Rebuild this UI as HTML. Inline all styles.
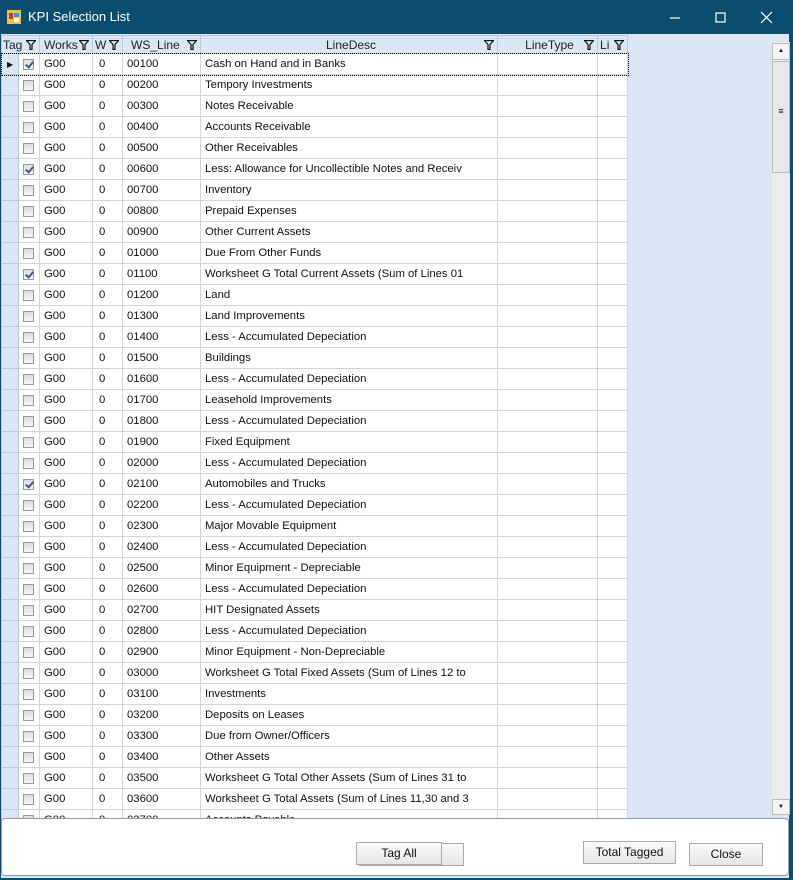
<!DOCTYPE html>
<html><head><style>
*{margin:0;padding:0;box-sizing:border-box}
body{width:793px;height:880px;overflow:hidden;background:#0b4f70;font-family:"Liberation Sans",sans-serif;font-size:11.3px;color:#111;position:relative}
.title{position:absolute;left:0;top:0;width:793px;height:34px;background:#0a4d6e;color:#fff}
.title .t{position:absolute;left:28px;top:9px;font-size:13px}
.client{position:absolute;left:1px;top:34px;width:788px;height:844px;background:#dbe6f4}
table{position:absolute;left:0;top:1px;border-collapse:collapse;table-layout:fixed;width:627px}
td,th{height:21px;border:1px solid #d5d5d5;white-space:nowrap;overflow:hidden;padding-left:4px;font-weight:normal;text-align:left}
th{height:18px;background:#dbe6f4;border-color:#b9c8dc;position:relative;color:#222;font-size:12px}
td{background:#fff}
td.rh{background:#dbe6f4;border-color:#b9c8dc;padding:0}
.cb{display:inline-block;width:11px;height:11px;border:1px solid #999;background:linear-gradient(#ddd,#f6f6f6);vertical-align:middle;position:relative}
.cb.c::after{content:"";position:absolute;left:3px;top:0px;width:3px;height:6px;border:solid #3b5998;border-width:0 2px 2px 0;transform:rotate(40deg)}
.f{position:absolute;right:3px;top:4px;width:10px;height:10px}
.sb{position:absolute;left:771px;top:8px;width:18px;height:773px;background:#ececec}
.bot{position:absolute;left:0;top:784px;width:788px;height:58px;background:#fff;border:1px solid #999;border-radius:4px}
.btn{position:absolute;height:23px;border:1px solid #aaa;background:linear-gradient(#fafafa,#e6e6e6);text-align:center;line-height:21px;font-size:12px}
</style></head><body>
<div class="title">
<svg style="position:absolute;left:7px;top:10px" width="14" height="14"><rect x="0" y="0" width="14" height="14" fill="#f0c040"/><rect x="2" y="3" width="4" height="6" fill="#c33"/><rect x="7" y="3" width="5" height="4" fill="#39c"/><rect x="7" y="8" width="5" height="4" fill="#fff"/></svg>
<span class="t">KPI Selection List</span>
<svg style="position:absolute;left:668px;top:11px" width="110" height="14" stroke="#fff" fill="none" stroke-width="1.2"><line x1="2" y1="7" x2="12" y2="7"/><rect x="48" y="2" width="9" height="9"/><line x1="93" y1="1" x2="104" y2="12"/><line x1="104" y1="1" x2="93" y2="12"/></svg>
</div>
<div class="client">
<table>
<colgroup><col style="width:17px"><col style="width:21px"><col style="width:53px"><col style="width:30px"><col style="width:78px"><col style="width:297px"><col style="width:100px"><col style="width:30px"></colgroup>
<tr><th style="padding-left:1px" colspan="2">Tag<svg class="f"></svg></th><th>Works<svg class="f"></svg></th><th style="padding-left:2px">W<svg class="f"></svg></th><th style="padding-left:8px">WS_Line<svg class="f"></svg></th><th style="text-align:center">LineDesc<svg class="f"></svg></th><th style="text-align:center">LineType<svg class="f"></svg></th><th style="padding-left:2px">Li<svg class="f"></svg></th></tr>
<tbody id="b"></tbody>
</table>
<div class="sb"><div style="position:absolute;left:0;top:1px;width:18px;height:17px;border:1px solid #bbb;background:#f4f4f4;font-size:6px;text-align:center;line-height:15px">▲</div><div style="position:absolute;left:0;top:19px;width:18px;height:112px;border:1px solid #bbb;background:#e8e8e8;text-align:center;padding-top:44px;font-size:9px">≡</div><div style="position:absolute;left:0;bottom:0;width:18px;height:16px;border:1px solid #bbb;background:#f4f4f4;font-size:6px;text-align:center;line-height:14px">▼</div></div>
<div class="bot">
<div class="btn" style="left:357px;top:24px;width:105px"></div>
<div class="btn" style="left:354px;top:23px;width:86px">Tag All</div>
<div class="btn" style="left:581px;top:22px;width:93px">Total Tagged</div>
<div class="btn" style="left:687px;top:24px;width:74px">Close</div>
</div>
</div>
<script>
document.querySelectorAll("svg.f").forEach(function(s){s.setAttribute("viewBox","0 0 10 10");s.innerHTML='<path d="M0.5 0.5H9.5L6 4.5V9.5H4V4.5Z" fill="none" stroke="#111" stroke-width="1.2"/>';});
var d=[["00100","Cash on Hand and in Banks",1],["00200","Tempory Investments"],["00300","Notes Receivable"],["00400","Accounts Receivable"],["00500","Other Receivables"],["00600","Less: Allowance for Uncollectible Notes and Receiv",1],["00700","Inventory"],["00800","Prepaid Expenses"],["00900","Other Current Assets"],["01000","Due From Other Funds"],["01100","Worksheet G Total Current Assets (Sum of Lines 01",1],["01200","Land"],["01300","Land Improvements"],["01400","Less - Accumulated Depeciation"],["01500","Buildings"],["01600","Less - Accumulated Depeciation"],["01700","Leasehold Improvements"],["01800","Less - Accumulated Depeciation"],["01900","Fixed Equipment"],["02000","Less - Accumulated Depeciation"],["02100","Automobiles and Trucks",1],["02200","Less - Accumulated Depeciation"],["02300","Major Movable Equipment"],["02400","Less - Accumulated Depeciation"],["02500","Minor Equipment - Depreciable"],["02600","Less - Accumulated Depeciation"],["02700","HIT Designated Assets"],["02800","Less - Accumulated Depeciation"],["02900","Minor Equipment  - Non-Depreciable"],["03000","Worksheet G Total Fixed Assets (Sum of Lines 12 to"],["03100","Investments"],["03200","Deposits on Leases"],["03300","Due from Owner/Officers"],["03400","Other Assets"],["03500","Worksheet G Total Other Assets (Sum of Lines 31 to"],["03600","Worksheet G Total Assets (Sum of Lines 11,30 and 3"],["03700","Accounts Payable"]];
var h="";d.forEach(function(r,i){h+='<tr><td class="rh">'+(i==0?'<span style="font-size:8px;padding-left:5px">▶</span>':'')+'</td><td style="padding-left:4px"><span class="cb'+(r[2]?' c':'')+'"></span></td><td>G00</td><td style="padding-left:6px">0</td><td>'+r[0]+'</td><td>'+r[1]+'</td><td></td><td></td></tr>';});
document.getElementById("b").innerHTML=h;
document.querySelector("#b tr").style.outline="1px dotted #000";
</script>
</body></html>
